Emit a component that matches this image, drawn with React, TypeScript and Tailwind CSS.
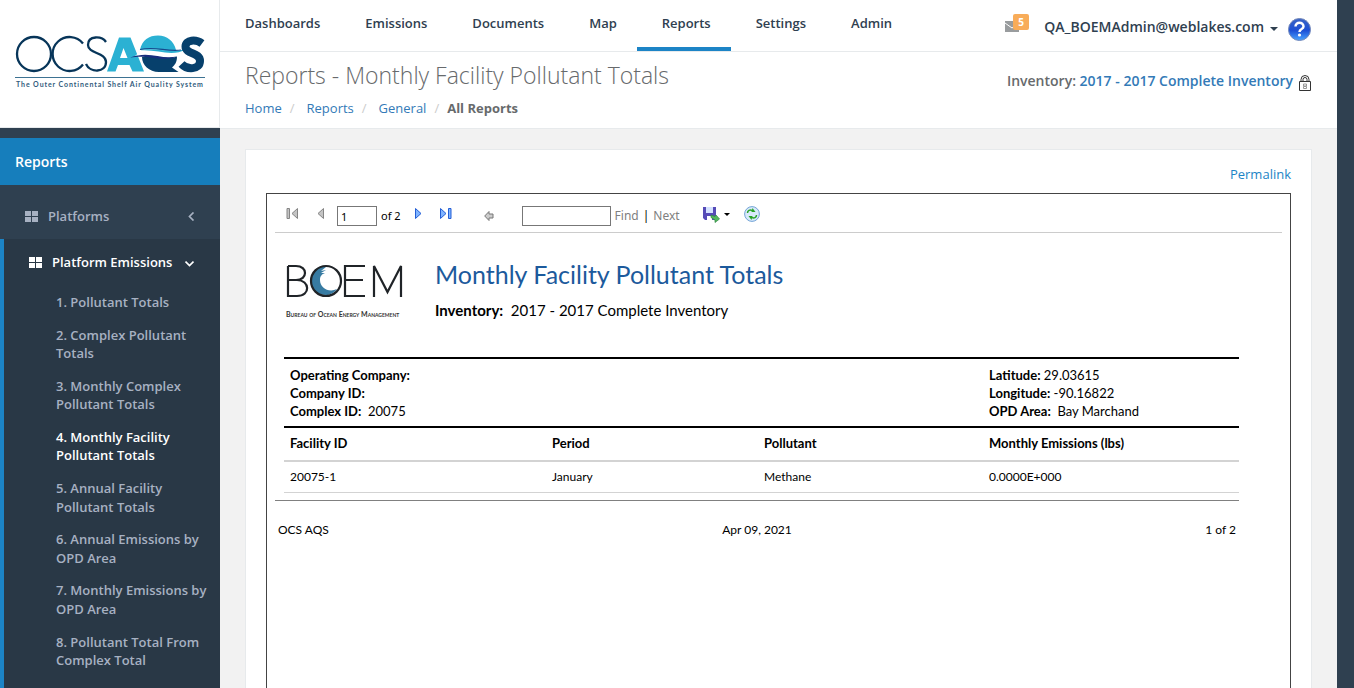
import React from "react";

const tabs = ["Dashboards", "Emissions", "Documents", "Map", "Reports", "Settings", "Admin"];

const reports = [
  "1. Pollutant Totals",
  "2. Complex Pollutant Totals",
  "3. Monthly Complex Pollutant Totals",
  "4. Monthly Facility Pollutant Totals",
  "5. Annual Facility Pollutant Totals",
  "6. Annual Emissions by OPD Area",
  "7. Monthly Emissions by OPD Area",
  "8. Pollutant Total From Complex Total",
];

function Logo() {
  return (
    <svg width="192" height="54" viewBox="0 0 192 54" role="img" aria-label="OCS AQS">
      <g fill="none" stroke="#073559" strokeWidth="2.3">
        <circle cx="19" cy="19" r="17" />
        <path d="M68 8.500A17 17 0 1 0 68 29.500" />
        <path d="M91 7C87 1 73 0 73 10C73 19 91 17 91 27C91 38 75 38 71 29" />
      </g>
      <path fill="#2bb1d3" fillRule="evenodd" d="M104 2.500H115.500L129 36.500H117.500L114.500 30H103L100.500 36.500H92ZM108.500 13L105 23H112.500Z" />
      <path fill="#2bb1d3" d="M125 15C127 5 134 .5 143 .5C152 .5 159 6 161 15C152 18 142 12 125 15Z" />
      <path fill="#07406c" d="M127 22C138 18 148 26 162 21.500C162 27 160 30 157 32.500L163.500 37H144C134 37 127 30 127 22Z" />
      <path fill="#fff" d="M120 20.500C134 12 151 20 170 15C158 25 146 17 128 21Z" />
      <path fill="#2bb1d3" d="M125 15.500C140 11.500 153 19 171 14C157 23 143 14 125 15.500Z" />
      <path fill="none" stroke="#164a8d" strokeWidth="1.200" d="M125 14.500C141 11 151 17 166 15" />
      <path fill="#172e7d" d="M115 22.500C135 15 145 25 162 21.500C146 28 137 19 115 22.500Z" />
      <path fill="none" stroke="#07406c" strokeWidth="8" d="M187 8.500C181 4 170.500 4.500 170.500 11.500C170.500 19.500 185 17 185 26C185 35 172 35 166.500 29" />
      <path stroke="#3d7292" d="M0 42.500H190" />
      <text x="1" y="51.500" fill="#315b7c" fontFamily="Lato, sans-serif" fontSize="7" fontWeight="700" letterSpacing="0.900">The Outer Continental Shelf Air Quality System</text>
    </svg>
  );
}

function Boem() {
  return (
    <svg width="120" height="60" viewBox="0 0 120 60" role="img" aria-label="BOEM">
      <g fill="none" stroke="#202428" strokeWidth="2.200">
        <path d="M3 6V36H12C26 36 25 20 12 20H3M3 6H11C23 6 23 20 11 20" />
        <path d="M80 6H60V36H80M60 20H78M89 37V6L102.500 32L116 6V37" />
      </g>
      <path fill="#377ba2" d="M41 7C36 5 27 10 26 21C26 30 34 36 43 35C47 34 50 32 52 29C44 33 35 28 35 20C35 16 37 14 40 13L36 13L41 10L36 11Z" />
      <circle cx="41" cy="21" r="15" fill="none" stroke="#202428" strokeWidth="2.200" />
      <text x="1" y="57" fill="#333" fontFamily="Lato, sans-serif" fontSize="7" fontWeight="700" style={{ fontVariant: "small-caps" }}>Bureau of Ocean Energy Management</text>
    </svg>
  );
}

function GridIcon() {
  return (
    <svg width="13" height="12" viewBox="0 0 13 12" fill="currentColor" aria-hidden="true">
      <path d="M0 0h6v5H0zM7 0h6v5H7zM0 6h6v5H0zM7 6h6v5H7z" />
    </svg>
  );
}

function PageArrow({ last = false, flip = false, grey = false }: { last?: boolean; flip?: boolean; grey?: boolean }) {
  return (
    <svg width="12" height="12" viewBox="0 0 12 12" className={flip ? "-scale-x-100" : ""} aria-hidden="true">
      <g fill={grey ? "#c4c4c4" : "#7fb4ff"} stroke={grey ? "#858585" : "#245ed5"}>
        <path d="M.5 .5V10.500L6 5.500Z" />
        {last && <path d="M8.500 .5H11V10.500H8.500Z" />}
      </g>
    </svg>
  );
}

function Field({ label, value }: { label: string; value?: string }) {
  return (
    <div className="whitespace-pre">
      <b>{label}:</b>
      {value}
    </div>
  );
}

export default function App() {
  return (
    <div className="flex h-screen overflow-hidden bg-[#f2f2f2] font-['Open_Sans',sans-serif] text-[13px] text-[#2f4050]">
      <aside className="flex w-[220px] shrink-0 flex-col bg-[#2f4050] font-semibold">
        <div className="mb-[10px] h-32 border-r border-b border-[#e7eaec] bg-white pt-[35px] pl-[15px]">
          <Logo />
        </div>
        <h2 className="flex h-[47px] shrink-0 items-center bg-[#167ebc] px-[15px] text-sm text-white">Reports</h2>
        <a href="#platforms" className="flex h-[54px] shrink-0 items-center pt-[9px] pr-[25px] pl-[25px] text-[#a7b1c2]">
          <GridIcon />
          <span className="ml-[10px] flex-1">Platforms</span>
          <svg width="7" height="9" viewBox="0 0 7 9" fill="none" stroke="currentColor" strokeWidth="1.7" aria-hidden="true"><path d="M5.500 .5L1.500 4.500L5.500 8.500" /></svg>
        </a>
        <nav className="flex-1 border-l-4 border-[#1c84c6] bg-[#293846]" aria-label="Platform emissions reports">
          <a href="#emissions" className="flex h-[47px] items-center pt-px pr-[26px] pl-[25px] text-white">
            <GridIcon />
            <span className="ml-[10px] flex-1 whitespace-nowrap">Platform Emissions</span>
            <svg width="9" height="7" viewBox="0 0 9 7" fill="none" stroke="currentColor" strokeWidth="1.7" aria-hidden="true"><path d="M.5 1.500L4.500 5.500L8.500 1.500" /></svg>
          </a>
          <ul>
            {reports.map((r, i) => (
              <li key={r}>
                <a href={"#report" + i} className={`block py-[7px] pr-[10px] pl-[52px] leading-[1.43] ${i === 3 ? "text-white" : "text-[#a7b1c2]"}`}>{r}</a>
              </li>
            ))}
          </ul>
        </nav>
      </aside>

      <main className="flex min-w-0 flex-1 flex-col">
        <header className="flex h-[52px] shrink-0 justify-between border-b border-[#e7eaec] bg-white">
          <nav className="flex" aria-label="Main">
            {tabs.map((t) => (
              <a key={t} href={"#" + t} className={`h-[51px] border-b-4 pt-[14px] pr-5 pl-[25px] font-semibold ${t === "Reports" ? "border-[#1c84c6]" : "border-transparent"}`}>{t}</a>
            ))}
          </nav>
          <div className="flex pr-[25px]">
            <a href="#messages" aria-label="Messages" className="mt-[14px] mr-[15px]">
              <svg width="25" height="20" viewBox="0 0 25 20">
                <path fill="#999c9e" d="M1 7h14v11H1z" />
                <path d="M1 9L8 14L15 9" fill="none" stroke="#fff" />
                <rect x="9" width="16" height="16" rx="2" fill="#f8ac59" />
                <text x="17" y="12" textAnchor="middle" fill="#fff" fontFamily="Open Sans" fontSize="10" fontWeight="700">5</text>
              </svg>
            </a>
            <button className="flex h-[54px] items-center gap-[6px] text-sm font-semibold">
              QA_BOEMAdmin@weblakes.com
              <svg className="mt-1" width="8" height="4" viewBox="0 0 8 4" aria-hidden="true"><path d="M0 0h8L4 4z" fill="currentColor" /></svg>
            </button>
            <a href="#help" aria-label="Help" className="mt-[17px] ml-[10px]">
              <svg width="24" height="24" viewBox="0 0 24 24">
                <defs><linearGradient id="help" x2="0" y2="1"><stop stopColor="#3a64c5" /><stop offset=".55" stopColor="#1d50d5" /><stop offset="1" stopColor="#49a5ff" /></linearGradient></defs>
                <circle cx="11.500" cy="12.500" r="11" fill="url(#help)" stroke="#7589b9" />
                <path d="M7.500 9.500C7.500 4.500 15.500 4.500 15.500 9.500C15.500 12.500 11.500 11.500 11.500 15" stroke="#fff" strokeWidth="2.500" fill="none" /><circle cx="11.500" cy="18" r="1.600" fill="#fff" />
              </svg>
            </a>
          </div>
        </header>

        <section className="flex h-[77px] shrink-0 justify-between border-b border-[#e7eaec] bg-white px-[25px] text-[#676a6c]">
          <div>
            <h1 className="mt-[6px] text-[23px] leading-[34px] font-light">Reports - Monthly Facility Pollutant Totals</h1>
            <nav aria-label="Breadcrumb" className="mt-[6px] flex leading-5 text-[#337ab7]">
              {["Home", "Reports", "General"].map((x) => (
                <React.Fragment key={x}><a href={"#" + x}>{x}</a><span className={`pl-2 text-[#ccc] ${x === "General" ? "pr-2" : "pr-3"}`}>/</span></React.Fragment>
              ))}
              <strong className="text-[#676a6c]">All Reports</strong>
            </nav>
          </div>
          <div className="flex h-[58px] items-center text-sm font-semibold">
            Inventory:&nbsp;<a href="#inventory" className="text-[#337ab7]">2017 - 2017 Complete Inventory</a>
            <svg className="mt-1 ml-[5px]" width="14" height="17" viewBox="0 0 14 17" fill="none" stroke="#333" aria-hidden="true"><path d="M3 6V4.500a4 4 0 0 1 8 0V6M5 6V4.500a2 2 0 0 1 4 0V6M1.500 6.500h11v9h-11z" /><path stroke="#999" d="M5.500 9h3v2h-3zM5.500 11.500h3v2h-3z" /></svg>
          </div>
        </section>

        <div className="mx-[25px] mt-5 flex min-h-0 flex-1 flex-col border border-b-0 border-[#e7eaec] bg-white px-5 text-black">
          <div className="h-[43px] shrink-0 pt-[15px] text-right"><a href="#permalink" className="text-[#1c84c6]">Permalink</a></div>
          <div className="min-h-0 flex-1 border border-b-0 border-[#444] px-2">
            <div className="flex h-[39px] items-center border-b border-[#ccc] pt-[6px] pl-[11px] font-['Noto_Sans',sans-serif] text-xs">
              <button aria-label="First page" className="mb-1"><PageArrow last flip grey /></button>
              <button aria-label="Previous page" className="mb-1 ml-[14px]"><PageArrow flip grey /></button>
              <input aria-label="Current page" defaultValue="1" className="ml-[13px] h-5 w-10 border border-[#777] px-[3px] text-[11px]" />
              <span className="ml-1 text-[11px]">of 2</span>
              <button aria-label="Next page" className="mb-1 ml-[14px]"><PageArrow /></button>
              <button aria-label="Last page" className="mb-1 ml-[13px]"><PageArrow last /></button>
              <button aria-label="Back" className="mb-px ml-8"><svg width="11" height="12" viewBox="0 0 11 12"><path d="M.7 6L5 1.500V4h4v4H5v2.500z" fill="#ccc" stroke="#777" /></svg></button>
              <input aria-label="Find text" className="ml-[27px] h-5 w-[89px] border border-[#777] px-1" />
              <button className="ml-1 text-[#808080]">Find</button><span className="mx-1">|</span><button className="text-[#808080]">Next</button>
              <button aria-label="Export" className="mb-1 ml-[23px] flex items-center gap-1">
                <svg width="17" height="17" viewBox="0 0 17 17"><path fill="#564bb7" d="M0 1h13v13H2L0 12z" /><path fill="#d5e2ff" d="M3 1h7v6H3z" /><path fill="#fff" d="M4 10h5v4H4z" /><path fill="#54b85f" stroke="#2e8540" strokeWidth=".7" d="M8 9l4 1.500 1-1.500 3.500 4L12 16.500V14L8 11.500z" /></svg>
                <svg width="6" height="3" viewBox="0 0 6 3"><path d="M0 0h6L3 3z" /></svg>
              </button>
              <button aria-label="Refresh" className="mb-1 ml-[14px]"><svg width="16" height="16" viewBox="0 0 16 16"><circle cx="8" cy="8" r="7.400" fill="#d9eafb" stroke="#73a4d6" /><g fill="none" stroke="#29a329" strokeWidth="1.500"><path d="M3.500 7C3.500 4.500 6 3.500 8 4.500M12.500 9C12.500 11.500 10 12.500 8 11.500" /></g><path fill="#29a329" d="M8.500 2l3 4H7.500zM7.500 14l-3-4H8.500z" /></svg></button>
            </div>

            <article className="mr-[43px] font-['Lato',sans-serif]">
              <header className="flex h-[124px] pt-[27px] pl-[10px]">
                <Boem />
                <div className="ml-[30px]">
                  <h2 className="-mt-px text-[25px] leading-[30px] text-[#1c5a9c]">Monthly Facility Pollutant Totals</h2>
                  <p className="mt-[11px] text-[15px] leading-5 whitespace-pre"><b>Inventory:</b>{"  2017 - 2017 Complete Inventory"}</p>
                </div>
              </header>
              <div className="ml-[9px]">
                <div className="flex h-[71px] justify-between border-y-2 border-black pt-[7px] pl-[6px] leading-[18px]">
                  <div><Field label="Operating Company" /><Field label="Company ID" /><Field label="Complex ID" value="  20075" /></div>
                  <div className="w-[250px]"><Field label="Latitude" value=" 29.03615" /><Field label="Longitude" value=" -90.16822" /><Field label="OPD Area" value="  Bay Marchand" /></div>
                </div>
                <table className="w-full table-fixed border-collapse text-left">
                  <colgroup><col /><col className="w-[212px]" /><col className="w-[225px]" /><col className="w-[256px]" /></colgroup>
                  <thead><tr className="h-[33px] border-b-2 border-[#d3d3d3]">{["Facility ID", "Period", "Pollutant", "Monthly Emissions (lbs)"].map((x) => <th key={x} className="pl-[6px]">{x}</th>)}</tr></thead>
                  <tbody><tr className="h-[31px] border-b border-[#d3d3d3] text-xs">{["20075-1", "January", "Methane", "0.0000E+000"].map((x) => <td key={x} className="pl-[6px]">{x}</td>)}</tr></tbody>
                </table>
              </div>
              <footer className="mt-[7px] grid grid-cols-3 border-t border-[#808080] px-[3px] pt-[19px] text-xs leading-5"><span>OCS AQS</span><span className="text-center">Apr 09, 2021</span><span className="text-right">1 of 2</span></footer>
            </article>
          </div>
        </div>
      </main>
      <div className="w-[17px] shrink-0 bg-[#2f4050]" />
    </div>
  );
}
